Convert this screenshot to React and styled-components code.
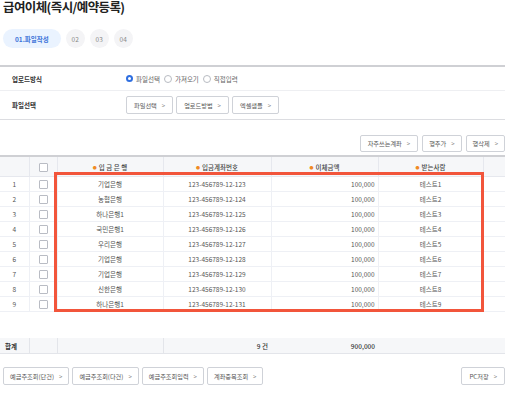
import React from "react";
import styled, { createGlobalStyle } from "styled-components";

const GlobalStyle = createGlobalStyle`
  body {
    margin: 0;
    background: #fff;
    font-family: "Noto Sans CJK KR", "Noto Sans", sans-serif;
    color: #444;
  }
`;

const Page = styled.div`
  width: 505px;
  height: 394px;
  overflow: hidden;
`;

const Title = styled.h2`
  margin: -2px 0 0 3px;
  font-size: 12.5px;
  line-height: 17px;
  font-weight: 700;
  letter-spacing: -0.6px;
  color: #222;
`;

const Steps = styled.div`
  display: flex;
  gap: 5px;
  margin: 14px 0 0 3px;
`;

const Step = styled.div`
  height: 19px;
  min-width: 19px;
  padding: 0 ${p => (p.$active ? "12px" : "0")};
  border-radius: 10px;
  display: flex;
  align-items: center;
  justify-content: center;
  font-size: 6.5px;
  font-weight: ${p => (p.$active ? 700 : 400)};
  color: ${p => (p.$active ? "#3d73d9" : "#888")};
  background: ${p => (p.$active ? "#eaf3ff" : "#f4f4f6")};
`;

const FormTable = styled.div`
  margin-top: 17px;
  border-top: 2px solid #cfd0d4;
`;

const FormRow = styled.div`
  display: flex;
  align-items: center;
  height: ${p => p.$h}px;
  border-bottom: 1px solid ${p => (p.$last ? "#dcdde1" : "#eeeff2")};
`;

const FormLabel = styled.div`
  width: 126px;
  padding-left: 12px;
  box-sizing: border-box;
  font-size: 6.5px;
  font-weight: 700;
  color: #333;
`;

const RadioGroup = styled.div`
  display: flex;
  align-items: center;
  gap: 4px;
`;

const Radio = styled.span`
  display: inline-flex;
  align-items: center;
  gap: 3px;
  font-size: 6.5px;
  color: #666;
  &::before {
    content: "";
    width: ${p => (p.$on ? "3px" : "6px")};
    height: ${p => (p.$on ? "3px" : "6px")};
    border-radius: 50%;
    border: ${p => (p.$on ? "2.5px solid #2f6fe0" : "1px solid #b8bbc2")};
    background: #fff;
  }
`;

const BtnGroup = styled.div`
  display: flex;
  gap: ${p => p.$gap ?? 3}px;
`;

const Btn = styled.button`
  height: ${p => p.$h ?? 18}px;
  padding: 0 ${p => p.$px ?? 7}px;
  border: 1px solid #cfd2d8;
  border-radius: 2px;
  background: #fff;
  font-family: inherit;
  font-size: 6.2px;
  color: #555;
  display: flex;
  align-items: center;
  gap: 5px;
  white-space: nowrap;
  &::after {
    content: ">";
    font-size: 6px;
    color: #777;
  }
`;

const Toolbar = styled.div`
  display: flex;
  justify-content: ${p => p.$justify ?? "flex-end"};
  margin: ${p => p.$margin};
  padding: ${p => p.$pad ?? "0"};
`;

const GridWrap = styled.div`
  position: relative;
  margin-top: 3px;
`;

const Grid = styled.table`
  width: 505px;
  border-collapse: collapse;
  table-layout: fixed;
  border-top: 2px solid #cfd0d4;
  font-size: 6.5px;
  color: #555;
`;

const Th = styled.th`
  height: 19px;
  padding: 0;
  background: #f6f7f9;
  font-weight: 500;
  color: #444;
  border-left: ${p => (p.$first ? "none" : "1px solid #e6e8ee")};
  border-bottom: 1px solid #e6e8ee;
  &::before {
    content: ${p => (p.$req ? '"●"' : "none")};
    color: #f08a24;
    font-size: 4px;
    margin-right: 2px;
    vertical-align: middle;
  }
`;

const Td = styled.td`
  height: 14px;
  padding: 0 ${p => (p.$align === "right" ? "3px" : "0")};
  text-align: ${p => p.$align ?? "center"};
  border-left: ${p => (p.$first ? "none" : "1px solid #eef0f5")};
  border-bottom: 1px solid #eef0f5;
  white-space: nowrap;
  overflow: hidden;
`;

const Filler = styled.td`
  height: 24px;
  border: none;
`;

const TotalTd = styled.td`
  height: 15px;
  padding: 0 ${p => (p.$align === "right" ? "3px" : "0")};
  background: #f6f7f9;
  text-align: ${p => p.$align ?? "left"};
  border-left: ${p => (p.$line ? "1px solid #e3e5ea" : "none")};
  border-bottom: 1px solid #e3e5ea;
  font-weight: ${p => (p.$bold ? 700 : 500)};
  color: #333;
  padding-left: ${p => (p.$bold ? "5px" : undefined)};
`;

const Box = styled.div`
  position: absolute;
  left: 54px;
  top: 17px;
  width: 430px;
  height: 140px;
  box-sizing: border-box;
  border: 3px solid #f2553b;
  pointer-events: none;
`;

const Check = styled.span`
  display: inline-block;
  width: 7px;
  height: 7px;
  border: 1px solid #b9bcc4;
  border-radius: 1px;
  background: #fff;
  vertical-align: middle;
`;

const rows = [
  ["기업은행", "123-456789-12-123", "테스트1"],
  ["농협은행", "123-456789-12-124", "테스트2"],
  ["하나은행1", "123-456789-12-125", "테스트3"],
  ["국민은행1", "123-456789-12-126", "테스트4"],
  ["우리은행", "123-456789-12-127", "테스트5"],
  ["기업은행", "123-456789-12-128", "테스트6"],
  ["기업은행", "123-456789-12-129", "테스트7"],
  ["신한은행", "123-456789-12-130", "테스트8"],
  ["하나은행1", "123-456789-12-131", "테스트9"],
];

const widths = [29, 28, 106, 108, 107, 105, 22];

const App = () => {
  return (
    <Page>
      <GlobalStyle />
      <Title>급여이체(즉시/예약등록)</Title>

      <Steps>
        <Step $active>01.파일작성</Step>
        <Step>02</Step>
        <Step>03</Step>
        <Step>04</Step>
      </Steps>

      <FormTable>
        <FormRow $h={23}>
          <FormLabel>업로드방식</FormLabel>
          <RadioGroup>
            <Radio $on>파일선택</Radio>
            <Radio>가져오기</Radio>
            <Radio>직접입력</Radio>
          </RadioGroup>
        </FormRow>
        <FormRow $h={28} $last>
          <FormLabel>파일선택</FormLabel>
          <BtnGroup>
            <Btn $px={7}>파일선택</Btn>
            <Btn $px={7}>업로드방법</Btn>
            <Btn $px={7}>엑셀샘플</Btn>
          </BtnGroup>
        </FormRow>
      </FormTable>

      <Toolbar $margin="15px 0 0 0">
        <BtnGroup $gap={4}>
          <Btn $h={17} $px={7}>자주쓰는계좌</Btn>
          <Btn $h={17} $px={6}>행추가</Btn>
          <Btn $h={17} $px={6}>행삭제</Btn>
        </BtnGroup>
      </Toolbar>

      <GridWrap>
        <Grid>
          <colgroup>
            {widths.map((w, i) => (
              <col key={i} style={{ width: w }} />
            ))}
          </colgroup>
          <thead>
            <tr>
              <Th $first></Th>
              <Th><Check /></Th>
              <Th $req>입 금 은 행</Th>
              <Th $req>입금계좌번호</Th>
              <Th $req>이체금액</Th>
              <Th $req>받는사람</Th>
              <Th></Th>
            </tr>
          </thead>
          <tbody>
            {rows.map((r, i) => (
              <tr key={i}>
                <Td $first>{i + 1}</Td>
                <Td><Check /></Td>
                <Td>{r[0]}</Td>
                <Td>{r[1]}</Td>
                <Td $align="right">100,000</Td>
                <Td>{r[2]}</Td>
                <Td></Td>
              </tr>
            ))}
            <tr>
              <Filler colSpan={7} />
            </tr>
            <tr>
              <TotalTd $bold>합계</TotalTd>
              <TotalTd $line></TotalTd>
              <TotalTd $line></TotalTd>
              <TotalTd $line $align="right">9 건</TotalTd>
              <TotalTd $align="right">900,000</TotalTd>
              <TotalTd></TotalTd>
              <TotalTd></TotalTd>
            </tr>
          </tbody>
        </Grid>
        <Box />
      </GridWrap>

      <Toolbar $justify="space-between" $margin="13px 0 0 0" $pad="0 0 0 3px">
        <BtnGroup $gap={3}>
          <Btn $px={6}>예금주조회(단건)</Btn>
          <Btn $px={6}>예금주조회(다건)</Btn>
          <Btn $px={6}>예금주조회입력</Btn>
          <Btn $px={6}>계좌중복조회</Btn>
        </BtnGroup>
        <Btn $px={7}>PC저장</Btn>
      </Toolbar>
    </Page>
  );
};

export default App;
